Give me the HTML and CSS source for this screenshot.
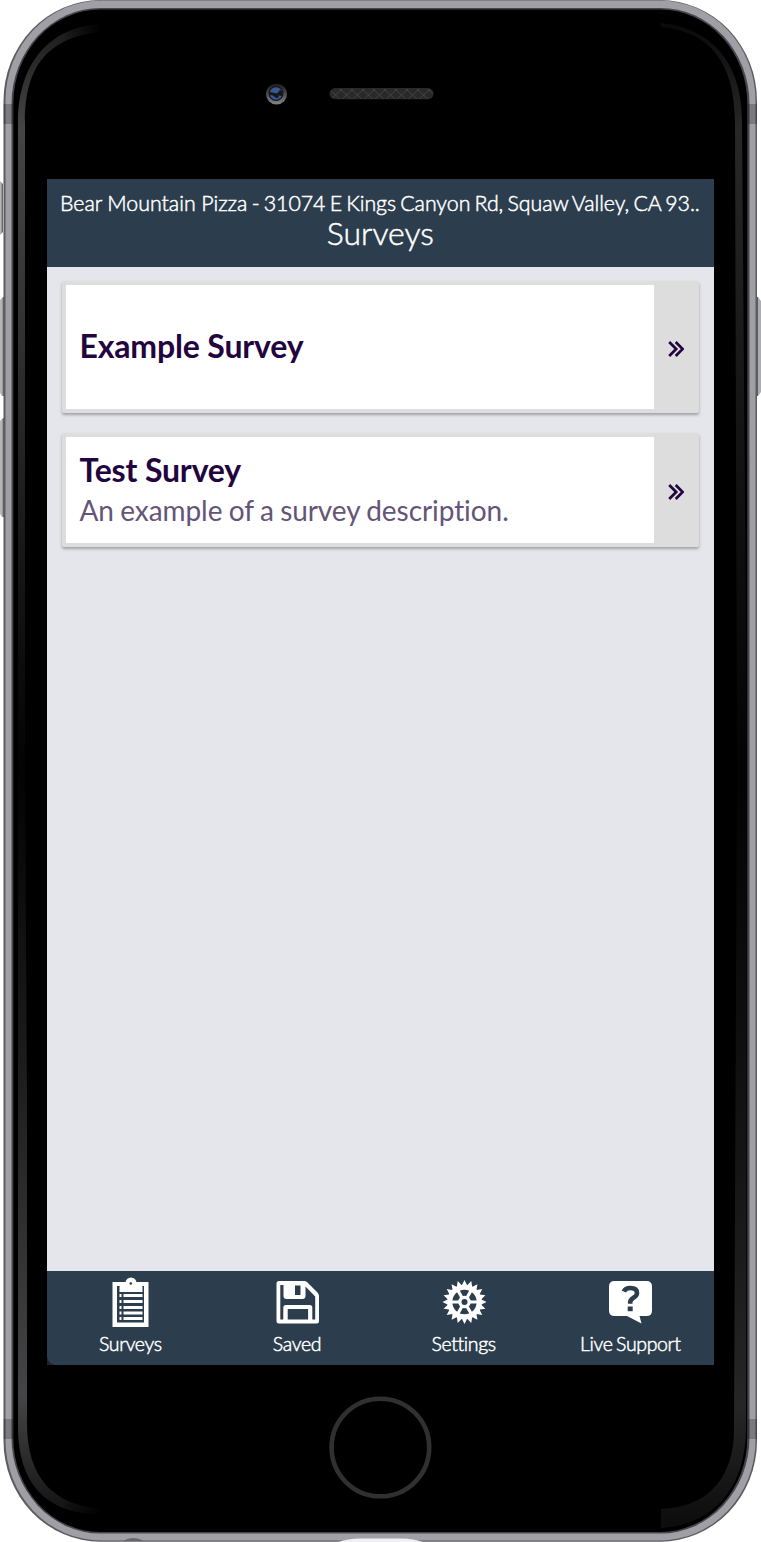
FILE: index.html
```html
<!DOCTYPE html>
<html lang="en">
<head>
<meta charset="utf-8">
<title>Surveys</title>
<link rel="stylesheet" href="styles.css">
</head>
<body>
<div class="phone">
  <svg class="device" viewBox="0 0 761 1542" aria-hidden="true">
    <defs>
      <linearGradient id="key" x1="0" x2="1" y1="0" y2="0"><stop offset="0" stop-color="#b8babd"/><stop offset=".45" stop-color="#aeb0b3"/><stop offset=".6" stop-color="#68696d"/><stop offset="1" stop-color="#68696d"/></linearGradient>
      <linearGradient id="glareL" gradientUnits="userSpaceOnUse" x1="0" x2="0" y1="24" y2="1515"><stop offset="0" stop-color="#1a1a1a"/><stop offset=".07" stop-color="#454545"/><stop offset=".2" stop-color="#333"/><stop offset=".35" stop-color="#181818"/><stop offset=".5" stop-color="#030303"/><stop offset=".7" stop-color="#1c1c1c"/><stop offset=".92" stop-color="#454547"/><stop offset=".97" stop-color="#262626"/><stop offset="1" stop-color="#111"/></linearGradient>
      <linearGradient id="glareR" gradientUnits="userSpaceOnUse" x1="0" x2="0" y1="24" y2="1528"><stop offset="0" stop-color="#0a0a0a"/><stop offset=".07" stop-color="#282828"/><stop offset=".25" stop-color="#161616"/><stop offset=".5" stop-color="#030303"/><stop offset=".75" stop-color="#141414"/><stop offset=".92" stop-color="#262626"/><stop offset="1" stop-color="#0c0c0c"/></linearGradient>
      <linearGradient id="fade" x1="0" x2="1" y1="0" y2="0"><stop offset="0" stop-color="#000" stop-opacity="0"/><stop offset="1" stop-color="#000"/></linearGradient>
      <pattern id="mesh" width="11" height="10" patternUnits="userSpaceOnUse"><path d="M0 0l11 10M11 0L0 10" stroke="#474747" stroke-width=".8"/></pattern>
      <linearGradient id="rim" x1="0" x2="0" y1="0" y2="1"><stop offset="0" stop-color="#181818"/><stop offset="1" stop-color="#858585"/></linearGradient>
    </defs>
    <g fill="url(#key)">
      <path d="M0 181l3 3v48l-3 3z"/>
      <path d="M0 300l3-3h2v99H2l-2-3z"/>
      <path d="M0 421l3-3h2v99H2l-2-3z"/>
    </g>
    <path d="M756 297h2l3 4v91l-3 4h-2z" fill="#aaacaf"/>
    <path d="M756.500 297h1.500v99h-1.500z" fill="#5d5e62"/>
    <rect x="3.500" y="0" width="753.500" height="1541.800" rx="97" ry="101" fill="#5c5b60"/>
    <rect x="5.500" y=".5" width="750" height="1540" rx="96" ry="100" fill="#a09fa5"/>
    <rect x="11.500" y="8" width="738" height="1525.500" rx="89" ry="96" fill="#46454b"/>
    <rect x="13.300" y="9.500" width="734" height="1522.500" rx="87" ry="94" fill="#000"/>
    <g fill="#000" fill-opacity=".23">
      <path d="M3.500 104H13v20H3.500zM748 104h9v20h-9zM3.500 1419H13v20H3.500zM748 1419h9v20h-9z"/>
    </g>
    <path d="M100 24C42 28 18 72 18 122V1430C19 1480 43 1514 99 1514V1508C54 1505 27 1478 27 1424V1100L25 770V122C25 72 43 38 100 32z" fill="url(#glareL)"/>
    <path d="M60 20h42v30H60zM60 1490h42v28H60z" fill="url(#fade)"/>
    <path d="M661 23C718 29 742 70 742 120L747 770L746 1430C745 1490 712 1525 661 1528V1509C713 1507 734 1472 734 1430L737 770L735 120C734 70 716 32 661 27z" fill="url(#glareR)"/>
    <circle cx="276.500" cy="94" r="10.500" fill="url(#rim)"/>
    <circle cx="276" cy="93.500" r="7.600" fill="#17191d"/>
    <circle cx="276" cy="93.500" r="6.200" fill="#3b5890"/>
    <path d="M270 92l7 1.500 3-3.500 2 1v5l-4-.5 1 2-3 .5-3-2.500-3-.5z" fill="#15171c"/>
    <rect x="329.500" y="88" width="104" height="11.200" rx="5.600" fill="#292929"/>
    <rect x="330" y="89" width="103" height="10" rx="5" fill="url(#mesh)"/>
    <circle cx="380.400" cy="1447.500" r="48.800" fill="none" stroke="#303030" stroke-width="4.600"/>
    <path d="M123 1541q10-6 21 0z" fill="#68676b"/>
    <path d="M338 1542q10-3.500 22-3.500h42q11 0 21 3.500z" fill="#f1f0f2"/>
    <path d="M47 1350h12v15H47z" fill="#222"/>
  </svg>

  <main class="screen">
    <header class="topbar">
      <div class="location"><span class="place">Bear Mountain Pizza</span> - 31074 E Kings Canyon Rd, Squaw Valley, CA 93..</div>
      <h1 class="title"><span>Surveys</span></h1>
    </header>

    <section class="list">
      <a class="card card-tall">
        <div class="card-body"><h2 class="card-title">Example Survey</h2></div>
        <div class="card-arrow"><svg class="chevrons" viewBox="0 0 16 16"><path d="M1.200 1l7 7-7 7M7.700 1l7 7-7 7"/></svg></div>
      </a>
      <a class="card">
        <div class="card-body">
          <h2 class="card-title">Test Survey</h2>
          <p class="card-text">An example of a survey description.</p>
        </div>
        <div class="card-arrow"><svg class="chevrons" viewBox="0 0 16 16"><path d="M1.200 1l7 7-7 7M7.700 1l7 7-7 7"/></svg></div>
      </a>
    </section>

    <nav class="tabs">
      <a class="tab">
        <svg class="icon" viewBox="0 0 50 52">
          <path fill-rule="evenodd" d="M7.500 6h36v45h-36zM12 10v36.500h27V10z"/>
          <path d="M14.500 16v-5q0-2 2-2h3q1 0 1-2a5.500 5.500 0 0 1 11 0q0 2 1 2h3q2 0 2 2v5z"/>
          <path d="M14.500 18h2v3h-2zm4 0h19v3h-19zM14.500 24h2v3h-2zm4 0h19v3h-19zM14.500 30h2v3h-2zm4 0h19v3h-19zM14.500 35.500h2v3h-2zm4 0h19v3h-19zM14.500 41h2v3h-2zm4 0h19v3h-19z"/>
          <circle class="cut" cx="25.800" cy="7.500" r="1.300"/>
        </svg>
        <span class="label">Surveys</span>
      </a>
      <a class="tab">
        <svg class="icon" viewBox="0 0 50 52">
          <path fill-rule="evenodd" d="M7 5h25.500q1.500 0 3 1.500l10 10q1.500 1.500 1.500 3.500v25q0 2.500-2.500 2.500h-37.500q-2.500 0-2.500-2.500V7.500Q4.500 5 7 5zM8.300 9v34.500h3V31.500q0-2.500 2.500-2.500h24q2.500 0 2.500 2.500v12h2.900V20.500L33.500 10.500V20q0 3-3 3H14.500q-3 0-3-3V9zM23 9.500v9.500h5.500V9.500zM15.700 33v10.500h20.400V33z"/>
        </svg>
        <span class="label">Saved</span>
      </a>
      <a class="tab">
        <svg class="icon" viewBox="0 0 50 52">
          <defs><path id="tooth" d="M22.300 10.500L25.500 4 28.700 10.500z"/></defs>
          <g>
            <use href="#tooth"/><use href="#tooth" transform="rotate(18 25.500 26)"/><use href="#tooth" transform="rotate(36 25.500 26)"/><use href="#tooth" transform="rotate(54 25.500 26)"/><use href="#tooth" transform="rotate(72 25.500 26)"/><use href="#tooth" transform="rotate(90 25.500 26)"/><use href="#tooth" transform="rotate(108 25.500 26)"/><use href="#tooth" transform="rotate(126 25.500 26)"/><use href="#tooth" transform="rotate(144 25.500 26)"/><use href="#tooth" transform="rotate(162 25.500 26)"/><use href="#tooth" transform="rotate(180 25.500 26)"/><use href="#tooth" transform="rotate(198 25.500 26)"/><use href="#tooth" transform="rotate(216 25.500 26)"/><use href="#tooth" transform="rotate(234 25.500 26)"/><use href="#tooth" transform="rotate(252 25.500 26)"/><use href="#tooth" transform="rotate(270 25.500 26)"/><use href="#tooth" transform="rotate(288 25.500 26)"/><use href="#tooth" transform="rotate(306 25.500 26)"/><use href="#tooth" transform="rotate(324 25.500 26)"/><use href="#tooth" transform="rotate(342 25.500 26)"/>
          </g>
          <circle class="ring" cx="25.500" cy="26" r="14.700"/>
          <path class="spokes" d="M12 26h27M18.750 14.300l13.500 23.400M32.250 14.300l-13.500 23.400"/>
          <circle cx="25.500" cy="26" r="6.300"/>
          <circle class="cut" cx="25.500" cy="26" r="3"/>
        </svg>
        <span class="label">Settings</span>
      </a>
      <a class="tab">
        <svg class="icon" viewBox="0 0 50 52">
          <path d="M9.500 5h32q5.500 0 5.500 5.500v24q0 5.500-5.500 5.500H34.500l2 7.500-14.500-7.500H9.500Q4 40 4 34.500v-24Q4 5 9.500 5z"/>
          <path class="mark" d="M18.800 15.500q1.500-3.500 6.500-3.500 6.700 0 6.700 5 0 2.800-3.500 4.800-3.300 2-3.300 4.500v1.500"/>
          <path class="cut" d="M22.700 30.500h5v4.700h-5z"/>
        </svg>
        <span class="label">Live Support</span>
      </a>
    </nav>
  </main>
</div>
</body>
</html>
```
FILE: styles.css
```css
* { box-sizing: border-box; }
body { margin: 0; background: #fff; font-family: Lato, "Open Sans", sans-serif; font-variant-ligatures: none; overflow: hidden; }
h1, h2, p { margin: 0; }

.phone { position: relative; width: 761px; height: 1542px; padding: 179px 47px 177px; }
.device { position: absolute; left: 0; top: 0; width: 761px; height: 1542px; }

.screen { position: relative; width: 666.600px; height: 1186px; display: flex; flex-direction: column; }

.topbar { height: 88px; padding: 11px 13px 0; background: #2c3d4d; color: #fff; }
.location { font-size: 21.330px; line-height: 26px; font-weight: 300; letter-spacing: -0.040px; word-spacing: -1.500px; white-space: nowrap; -webkit-text-stroke: .5px #fff; }
.place { letter-spacing: 0; word-spacing: -0.300px; }
.title { font-size: 32px; line-height: 34px; font-weight: 300; text-align: center; -webkit-text-stroke: .5px #fff; }

.list { flex: 1; display: flex; flex-direction: column; gap: 20px; padding: 14px 14.600px 0 14.500px; background: #e5e6ec; }
.card { display: flex; height: 114px; padding: 4px 0 4px 4px; background: #ddd; border-radius: 2px; box-shadow: 0 2px 3px rgba(0, 0, 0, .3); color: #22053e; }
.card-tall { height: 132px; }
.card-body { width: 588px; padding: 11.500px 14px 0; background: #fff; }
.card-tall .card-body { display: flex; align-items: center; padding: 0 14px 4px; }
.card-title { font-size: 32px; line-height: 41px; font-weight: 700; letter-spacing: -0.160px; white-space: nowrap; }
.card-text { font-size: 28px; line-height: 40px; letter-spacing: -0.070px; word-spacing: -0.700px; color: #645478; white-space: nowrap; }
.card-arrow { flex: 1; display: flex; align-items: center; justify-content: center; padding: 3px 1px 0 0; }
.chevrons { width: 16px; height: 16px; fill: none; stroke: #22053e; stroke-width: 2.700; }

.tabs { display: grid; grid-template-columns: repeat(4, 1fr); height: 94px; background: #2c3d4d; border-bottom-left-radius: 9px; }
.tab { display: flex; flex-direction: column; align-items: center; padding-top: 5px; color: #fff; }
.icon { width: 50px; height: 52px; fill: #fff; }
.cut { fill: #2c3d4d; }
.ring { fill: none; stroke: #fff; stroke-width: 5; }
.spokes { fill: none; stroke: #fff; stroke-width: 3.200; }
.mark { fill: none; stroke: #2c3d4d; stroke-width: 4.600; }
.label { font-size: 19.500px; line-height: 31px; font-weight: 300; letter-spacing: -0.350px; word-spacing: -1.500px; white-space: nowrap; -webkit-text-stroke: .5px #fff; }
```
